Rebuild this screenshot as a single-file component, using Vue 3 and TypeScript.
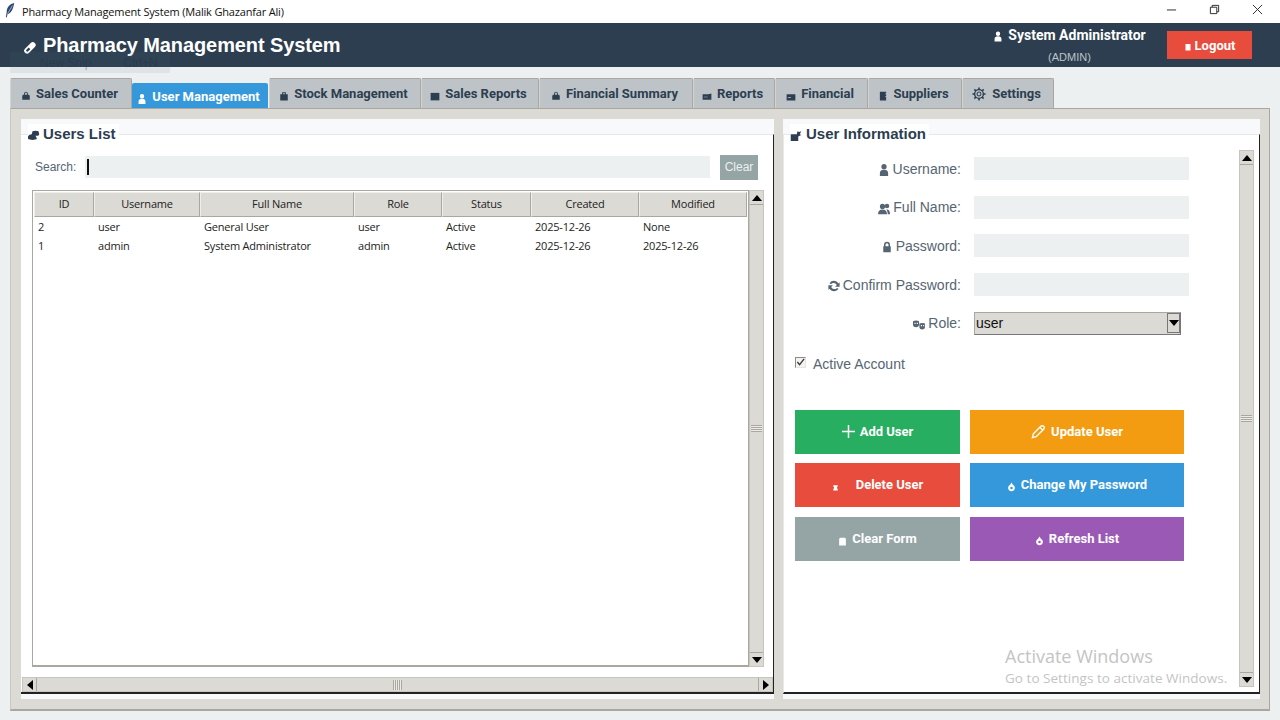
<script setup lang="ts">
const icons: Record<string, string> = {
  bag: 'M5 6V4a3 3 0 016 0v2h2l1 2v6H2V8l1-2zm1.500 0h3V4a1.500 1.500 0 00-3 0z',
  person: 'M8 0a3.500 3.500 0 110 7 3.500 3.500 0 010-7zM2.500 16v-4c0-3 2-4.500 5.500-4.500s5.500 1.500 5.500 4.500v4z',
  case: 'M5 5V2h6v3h3v10H2V5zm1.500 0h3V3.500h-3z',
  block: 'M1 3h14v12H1z',
  card: 'M1 5h9l5-1v10H1zm2 4v1h6V9z',
  flat: 'M1 5h14v10H1zm2 5v1h5v-1z',
  group: 'M6 1a3.500 3.500 0 110 7 3.500 3.500 0 010-7zm6 0a3 3 0 110 6 3 3 0 010-6zM0 15c0-4 2-6.500 6-6.500s6 2.500 6 6.500zm13 0c0-2.500-.5-5-2-6.500h1.500c2.500 0 3.500 3 3.500 6.500z',
  lock: 'M4 7V5a4 4 0 018 0v2h1v8H3V7zm2 0h4V5a2 2 0 00-4 0z',
  sync: 'M8 1a7 7 0 016 3.500L15.500 3v6h-6l2.200-2.200A4.500 4.500 0 004 5.500L2 4.300A7 7 0 018 1zM.5 7h6L4.300 9.200A4.500 4.500 0 0012 10.500l2 1.200A7 7 0 012 11.500L.5 13z',
  masks: 'M0 3c3-1.500 5.500-1.500 8 0v5c-.5 4-7.500 4-8 0zm2 2v1.500h1.500V5zm3 0v1.500h1.500V5zm3.500 1c2-1 5.500-1 7.500 0v5c-.5 4-7 4-7.500 0zm2 2v1.500H12V8zm3 0v1.500H15V8z',
  users: 'M0 10c1-2 3-3 5-3l1-4c2-1 6-1 8 0l1 4c0 2-2 2-3 2h-2l2 4c-2 2-10 2-12 0z',
  pill: 'M2.500 9.500l7-7a3.500 3.500 0 015 5l-7 7a3.500 3.500 0 01-5-5zm1.500 1.500a1.500 1.500 0 002 2l3-3-2-2z',
  door: 'M3 3h10v13H3z',
  trash: 'M3 3h10v3h-1.500v4l1.500 1v4H3v-4l1.500-1V6H3z',
  clip: 'M2 4l2-2h8l2 2v12H2z',
  ring: 'M8 0l2.500 4a6 6 0 11-5 0zm0 7.500a2.200 2.200 0 100 4.400 2.200 2.200 0 000-4.400z',
  cabinet: 'M3 1h10v3h-1.500v1H13v3h-1.500v1H13v6H3z',
}

const tabs = [
  { label: 'Sales Counter', icon: 'bag' },
  { label: 'User Management', icon: 'person', active: true },
  { label: 'Stock Management', icon: 'case' },
  { label: 'Sales Reports', icon: 'block' },
  { label: 'Financial Summary', icon: 'bag' },
  { label: 'Reports', icon: 'card' },
  { label: 'Financial', icon: 'flat' },
  { label: 'Suppliers', icon: 'cabinet' },
  { label: 'Settings', icon: 'gear' },
]

const columns = ['ID', 'Username', 'Full Name', 'Role', 'Status', 'Created', 'Modified']
const rows = [
  ['2', 'user', 'General User', 'user', 'Active', '2025-12-26', 'None'],
  ['1', 'admin', 'System Administrator', 'admin', 'Active', '2025-12-26', '2025-12-26'],
]

const fields = [
  { label: 'Username:', icon: 'person' },
  { label: 'Full Name:', icon: 'group' },
  { label: 'Password:', icon: 'lock' },
  { label: 'Confirm Password:', icon: 'sync' },
]

const actions = [
  { label: 'Add User', icon: 'plus', tone: 'green' },
  { label: 'Update User', icon: 'pencil', tone: 'orange' },
  { label: 'Delete User', icon: 'trash', tone: 'red' },
  { label: 'Change My Password', icon: 'ring', tone: 'blue' },
  { label: 'Clear Form', icon: 'clip', tone: 'grey' },
  { label: 'Refresh List', icon: 'ring', tone: 'purple' },
]
</script>

<template>
  <div class="window">
    <div class="titlebar">
      <svg class="feather" viewBox="0 0 12 18">
        <path d="M11 0C6 1 2 5 2 11l-1 6 1 .500 1-4c4-1 7-6 8-13.500z" fill="#2c4a6e" />
        <path d="M9 3L3 13" stroke="#a9c2dc" stroke-width="1" fill="none" />
      </svg>
      <span class="window-title">Pharmacy Management System (Malik Ghazanfar Ali)</span>
      <div class="controls">
        <svg viewBox="0 0 12 12"><path d="M1 6.500h10" /></svg>
        <svg viewBox="0 0 12 12"><path d="M1.500 3.500h7v7h-7zM3.500 3.500v-2h7v7h-2" /></svg>
        <svg viewBox="0 0 12 12"><path d="M1 1l10 10M11 1L1 11" /></svg>
      </div>
    </div>

    <header class="appbar">
      <h1 class="app-title">
        <svg class="i i-pill" viewBox="0 0 16 16"><path :d="icons.pill" /></svg>
        <span>Pharmacy Management System</span>
      </h1>
      <div class="account">
        <div class="account-name">
          <svg class="i i-acc" viewBox="0 0 16 16"><path :d="icons.person" /></svg>
          <span>System Administrator</span>
        </div>
        <div class="account-role">(ADMIN)</div>
      </div>
      <button class="logout">
        <svg class="i i-door" viewBox="0 0 16 16"><path :d="icons.door" /></svg>
        <span>Logout</span>
      </button>
    </header>

    <div class="ghost-snip"><span>New Snip</span><span>Ctrl+N</span></div>

    <nav class="tabs">
      <div v-for="t in tabs" :key="t.label" class="tab" :class="{ active: t.active }">
        <svg v-if="t.icon === 'gear'" class="i i-gear" viewBox="0 0 16 16">
          <circle cx="8" cy="8" r="5" fill="none" stroke="currentColor" stroke-width="1.600" />
          <circle cx="8" cy="8" r="2.200" fill="none" stroke="currentColor" stroke-width="1.200" />
          <path d="M8 .500v2.500M8 13v2.500M.500 8H3M13 8h2.500M2.700 2.700l1.800 1.800M11.500 11.500l1.800 1.800M13.300 2.700l-1.800 1.800M4.500 11.500l-1.800 1.800" stroke="currentColor" stroke-width="1.800" />
        </svg>
        <svg v-else class="i i-tab" viewBox="0 0 16 16"><path :d="icons[t.icon]" /></svg>
        <span>{{ t.label }}</span>
      </div>
    </nav>

    <main class="notebook">
      <section class="pane">
        <div class="pane-body">
          <h2 class="legend">
            <svg class="i i-legend" viewBox="0 0 16 16"><path :d="icons.users" /></svg>
            <span>Users List</span>
          </h2>
          <div class="search">
            <label>Search:</label>
            <div class="search-input"><i class="caret"></i></div>
            <button class="clear">Clear</button>
          </div>
          <div class="table-wrap">
            <div class="table">
              <div class="row head">
                <div v-for="c in columns" :key="c" class="th">{{ c }}</div>
              </div>
              <div v-for="r in rows" :key="r[0]" class="row">
                <div v-for="(v, i) in r" :key="i" class="td">{{ v }}</div>
              </div>
            </div>
            <div class="vbar">
              <div class="arrow"><i class="tri up"></i></div>
              <div class="thumb"><i class="grip-h"></i></div>
              <div class="arrow"><i class="tri down"></i></div>
            </div>
          </div>
          <div class="hbar">
            <div class="arrow"><i class="tri left"></i></div>
            <div class="thumb"><i class="grip-v"></i></div>
            <div class="arrow"><i class="tri right"></i></div>
          </div>
        </div>
      </section>

      <section class="pane pane-right">
        <div class="pane-body">
          <h2 class="legend">
            <svg class="i i-legend" viewBox="0 0 16 16"><path d="M1 7h8l1-4 2 1 3-1-2 4 2 1-4 2v6H1z" /></svg>
            <span>User Information</span>
          </h2>
          <div class="form-area">
            <div class="form">
              <div v-for="f in fields" :key="f.label" class="field">
                <label>
                  <svg class="i i-field" viewBox="0 0 16 16"><path :d="icons[f.icon]" /></svg>
                  <span>{{ f.label }}</span>
                </label>
                <div class="input"></div>
              </div>
              <div class="field field-role">
                <label>
                  <svg class="i i-field" viewBox="0 0 16 16"><path :d="icons.masks" /></svg>
                  <span>Role:</span>
                </label>
                <div class="select">
                  <span>user</span>
                  <div class="select-btn"><i class="tri down"></i></div>
                </div>
              </div>
              <div class="check">
                <span class="box">
                  <svg viewBox="0 0 10 10"><path d="M1.500 4.500l2.500 3L9 1" /></svg>
                </span>
                <span>Active Account</span>
              </div>
              <div class="actions">
                <button v-for="a in actions" :key="a.label" class="action" :class="a.tone">
                  <svg v-if="a.icon === 'plus'" class="i i-plus" viewBox="0 0 14 14">
                    <path d="M7 0v14M0 7h14" stroke="#fff" stroke-width="1.600" fill="none" />
                  </svg>
                  <svg v-else-if="a.icon === 'pencil'" class="i i-pencil" viewBox="0 0 16 16">
                    <path d="M1.500 14.500l1-4 8-8a1.800 1.800 0 013 3l-8 8zM10 4l2 2" stroke="#fff" stroke-width="1.500" fill="none" />
                  </svg>
                  <svg v-else class="i i-action" :class="'ic-' + a.icon" viewBox="0 0 16 16"><path :d="icons[a.icon]" /></svg>
                  <span>{{ a.label }}</span>
                </button>
              </div>
            </div>
            <div class="vbar vbar-right">
              <div class="arrow"><i class="tri up"></i></div>
              <div class="thumb"><i class="grip-h"></i></div>
              <div class="arrow"><i class="tri down"></i></div>
            </div>
          </div>
        </div>
      </section>
    </main>

    <div class="activate">
      <div class="activate-1">Activate Windows</div>
      <div class="activate-2">Go to Settings to activate Windows.</div>
    </div>
  </div>
</template>

<style>
html, body { margin: 0; background: #ecf0f1; }
</style>

<style scoped>
.window {
  position: relative;
  width: 1280px;
  height: 720px;
  overflow: hidden;
  background: #ecf0f1;
  display: flex;
  flex-direction: column;
  font-family: "Liberation Sans", Arial, sans-serif;
  color: #2c3e50;
}
button { font-family: inherit; border: 0; padding: 0; margin: 0; }
h1, h2 { margin: 0; }
.i { fill: currentColor; flex: none; display: block; }

.titlebar {
  height: 23px;
  background: #fff;
  display: flex;
  align-items: center;
  padding-left: 5px;
  box-sizing: border-box;
  flex: none;
}
.feather { width: 10px; height: 17px; margin-right: 7px; margin-top: -3px; }
.window-title {
  font: 11px "Open Sans", sans-serif;
  color: #111;
  letter-spacing: -0.170px;
  margin-top: -1px;
}
.controls {
  margin-left: auto;
  display: flex;
  gap: 32px;
  margin-right: 17px;
  margin-top: -5px;
}
.controls svg { width: 11px; height: 11px; fill: none; stroke: #222; stroke-width: 1; }

.appbar {
  height: 44px;
  flex: none;
  background: #2c3e50;
  display: flex;
  align-items: flex-start;
  box-sizing: border-box;
  padding-left: 23px;
  color: #fff;
}
.app-title {
  display: flex;
  align-items: center;
  font-size: 20px;
  font-weight: 700;
  letter-spacing: -0.100px;
  height: 22px;
  margin-top: 11px;
  white-space: nowrap;
}
.i-pill { width: 13px; height: 13px; margin: 4px 7px 0 0; }
.account {
  margin-left: auto;
  width: 175px;
  text-align: center;
  padding-top: 3px;
}
.account-name {
  display: flex;
  align-items: center;
  justify-content: center;
  gap: 5px;
  font-family: Roboto, sans-serif;
  font-size: 14px;
  font-weight: 700;
  height: 17px;
  white-space: nowrap;
}
.i-acc { width: 10px; height: 11px; margin-top: 3px; }
.account-role {
  font-size: 11px;
  color: #bdc3c7;
  margin-top: 7px;
  line-height: 14px;
}
.logout {
  width: 85px;
  height: 28px;
  margin: 8px 28px 0 10px;
  background: #e74c3c;
  color: #fff;
  font-family: Roboto, sans-serif;
  font-size: 13px;
  font-weight: 700;
  display: flex;
  align-items: center;
  justify-content: center;
  gap: 3px;
}
.i-door { width: 8px; height: 9px; margin-top: 3px; }

.ghost-snip {
  position: absolute;
  left: 10px;
  top: 52px;
  width: 160px;
  height: 21px;
  background: rgba(90, 120, 140, 0.1);
  display: flex;
  gap: 32px;
  padding-left: 30px;
  box-sizing: border-box;
  font: 12px/22px "Liberation Sans", sans-serif;
  color: rgba(30, 45, 60, 0.35);
}

.tabs {
  display: grid;
  grid-template-columns: 122px 137px 152px 118px 154px 82px 93px 94px 92px;
  align-items: end;
  height: 30px;
  margin: 11px 0 0 10px;
  flex: none;
}
.tab {
  height: 30px;
  box-sizing: border-box;
  background: #bdc3c7;
  border: 1px solid #a9a79f;
  border-bottom: 0;
  border-left-color: #d4d3ce;
  border-radius: 2px 2px 0 0;
  display: flex;
  align-items: center;
  justify-content: center;
  gap: 5px;
  padding-right: 3px;
  font-family: Roboto, sans-serif;
  font-size: 13px;
  font-weight: 700;
  white-space: nowrap;
}
.tab.active {
  height: 25px;
  background: #3498db;
  color: #fff;
  border: 0;
  margin-right: 1px;
  padding: 2px 3px 0 0;
  gap: 5px;
}
.i-tab { width: 10px; height: 10px; margin-top: 4px; }
.i-gear { width: 14px; height: 14px; margin-right: 1px; }

.notebook {
  width: 1260px;
  height: 603px;
  margin-left: 10px;
  box-sizing: border-box;
  background: #dcdad5;
  border-top: 1px solid #a9a79f;
  border-right: 1px solid #a9a79f;
  border-bottom: 2px solid #a9a79f;
  border-left: 1px solid #c9c8c2;
  padding: 10px 9px 10px 10px;
  display: grid;
  grid-template-columns: 753px 477px;
  gap: 9px;
  flex: none;
}
.pane {
  background: #f8f9fa;
  padding-top: 15px;
  padding-bottom: 5px;
  display: flex;
  min-height: 0;
}
.pane-body {
  flex: 1;
  min-width: 0;
  background: #fff;
  border-top: 1px solid #e6e8e9;
  border-right: 1px solid #222;
  border-bottom: 2px solid #222;
  display: flex;
  flex-direction: column;
}
.pane-right .pane-body { border-left: 1px solid #e6e8e9; }
.legend {
  display: flex;
  align-items: center;
  align-self: flex-start;
  gap: 3px;
  height: 18px;
  margin: -11px 0 0 7px;
  padding: 0 3px 0 0;
  background: #fff;
  font-size: 15px;
  font-weight: 700;
  color: #2c3e50;
  white-space: nowrap;
  flex: none;
}
.pane-right .legend { margin-left: 6px; gap: 4px; }
.i-legend { width: 12px; height: 12px; margin-top: 4px; }

.search {
  display: flex;
  align-items: center;
  height: 26px;
  margin-top: 12px;
  padding-left: 14px;
  font-size: 12px;
  color: #566573;
  flex: none;
}
.search label { width: 50px; }
.search-input {
  width: 625px;
  height: 22px;
  background: #ecf0f1;
  display: flex;
  align-items: center;
  padding-left: 2px;
  box-sizing: border-box;
}
.caret { width: 2px; height: 16px; background: #111; }
.clear {
  width: 38px;
  height: 25px;
  margin-left: 10px;
  background: #95a5a6;
  color: #ecf0f1;
  font-size: 12px;
}

.table-wrap {
  display: flex;
  height: 477px;
  margin: 10px 0 0 11px;
  flex: none;
}
.table {
  width: 717px;
  box-sizing: border-box;
  border: 1px solid #a9a79f;
  border-bottom-width: 2px;
  padding: 1px 0 0 1px;
  background: #fff;
}
.row {
  display: grid;
  grid-template-columns: 60px 106px 154px 88px 89px 108px 108px;
  height: 19px;
  font: 11px/19px "Open Sans", sans-serif;
  letter-spacing: -0.200px;
  color: #222;
}
.row.head { height: 25px; }
.th {
  background: #dcdad5;
  border: 1px solid #a9a79f;
  border-top-color: #efeeea;
  border-left-color: #efeeea;
  box-sizing: border-box;
  text-align: center;
  line-height: 22px;
}
.td { padding-left: 4px; }

.vbar, .hbar {
  background: #dcdad5;
  display: flex;
  flex: none;
}
.vbar {
  width: 15px;
  flex-direction: column;
  border: 1px solid #c6c4bd;
  box-sizing: border-box;
}
.hbar {
  height: 15px;
  margin: 10px 0 0 1px;
  border: 1px solid #c6c4bd;
  box-sizing: border-box;
}
.arrow {
  flex: none;
  display: flex;
  align-items: center;
  justify-content: center;
  background: #dcdad5;
  box-sizing: border-box;
}
.vbar .arrow { height: 14px; border-bottom: 1px solid #a9a79f; }
.vbar .arrow:last-child { border-bottom: 0; border-top: 1px solid #a9a79f; }
.hbar .arrow { width: 14px; border-right: 1px solid #a9a79f; }
.hbar .arrow:last-child { border-right: 0; border-left: 1px solid #a9a79f; }
.thumb {
  flex: 1;
  display: flex;
  align-items: center;
  justify-content: center;
  background: #dcdad5;
}
.grip-h {
  width: 11px;
  height: 7px;
  background: repeating-linear-gradient(#a9a79f 0 1px, #ecebe7 1px 2px);
}
.grip-v {
  width: 9px;
  height: 10px;
  background: repeating-linear-gradient(90deg, #a9a79f 0 1px, #ecebe7 1px 2px);
}
.tri { width: 0; height: 0; border-style: solid; border-color: transparent; display: block; }
.tri.up { border-width: 0 5px 6px; border-bottom-color: #000; }
.tri.down { border-width: 6px 5px 0; border-top-color: #000; }
.tri.left { border-width: 5px 6px 5px 0; border-right-color: #000; }
.tri.right { border-width: 5px 0 5px 6px; border-left-color: #000; }

.form-area {
  flex: 1;
  display: flex;
  min-height: 0;
}
.form {
  width: 455px;
  padding: 15px 0 0 11px;
  box-sizing: border-box;
}
.field {
  display: grid;
  grid-template-columns: 166px 215px;
  column-gap: 13px;
  align-items: center;
  height: 23px;
  margin-bottom: 15.700px;
  font-size: 14px;
  color: #566573;
}
.field label {
  display: flex;
  align-items: center;
  justify-content: flex-end;
  gap: 3px;
  white-space: nowrap;
}
.i-field { width: 12px; height: 12px; margin-top: 3px; }
.input { height: 23px; background: #ecf0f1; }
.select {
  width: 207px;
  height: 23px;
  box-sizing: border-box;
  background: #dcdad5;
  border: 1px solid #a9a79f;
  border-right-color: #777;
  border-bottom-color: #777;
  display: flex;
  align-items: center;
  justify-content: space-between;
  padding-left: 1px;
  font: 14px "Liberation Sans", sans-serif;
  color: #111;
}
.select-btn {
  width: 13px;
  height: 20px;
  display: flex;
  align-items: center;
  justify-content: center;
  border: 1px solid #777;
  box-sizing: border-box;
}
.check {
  display: flex;
  align-items: center;
  gap: 7px;
  height: 18px;
  margin-top: 20px;
  font-size: 14px;
  color: #566573;
}
.box {
  width: 11px;
  height: 11px;
  box-sizing: border-box;
  border: 1px solid #8d8b85;
  border-right-color: #e6e5e1;
  border-bottom-color: #e6e5e1;
  background: #f4f3f0;
  margin-top: -2px;
  display: block;
}
.box svg { width: 9px; height: 9px; display: block; fill: none; stroke: #3a3a3a; stroke-width: 1.500; }

.actions {
  display: grid;
  grid-template-columns: 165px 214px;
  grid-auto-rows: 44px;
  column-gap: 10px;
  row-gap: 9.500px;
  margin-top: 37px;
}
.action {
  display: flex;
  align-items: center;
  justify-content: center;
  gap: 5px;
  color: #fff;
  font-family: Roboto, sans-serif;
  font-size: 13px;
  font-weight: 700;
}
.action span { margin-top: -1px; }
.green { background: #27ae60; }
.orange { background: #f39c12; }
.red { background: #e74c3c; }
.blue { background: #3498db; }
.grey { background: #95a5a6; }
.purple { background: #9b59b6; }
.i-plus { width: 13px; height: 13px; }
.i-pencil { width: 15px; height: 15px; }
.i-action { width: 9px; height: 10px; margin-top: 4px; }
.ic-trash { width: 7px; height: 9px; margin-right: 12px; }

.vbar-right {
  height: 537px;
  margin: 8px 0 0 0;
}

.activate {
  position: absolute;
  left: 1005px;
  top: 644px;
  font-family: "Open Sans", sans-serif;
  color: #c4c4c4;
  pointer-events: none;
  white-space: nowrap;
}
.activate-1 { font-size: 18px; line-height: 24px; }
.activate-2 { font-size: 13.500px; line-height: 20px; letter-spacing: 0.030px; }
</style>
